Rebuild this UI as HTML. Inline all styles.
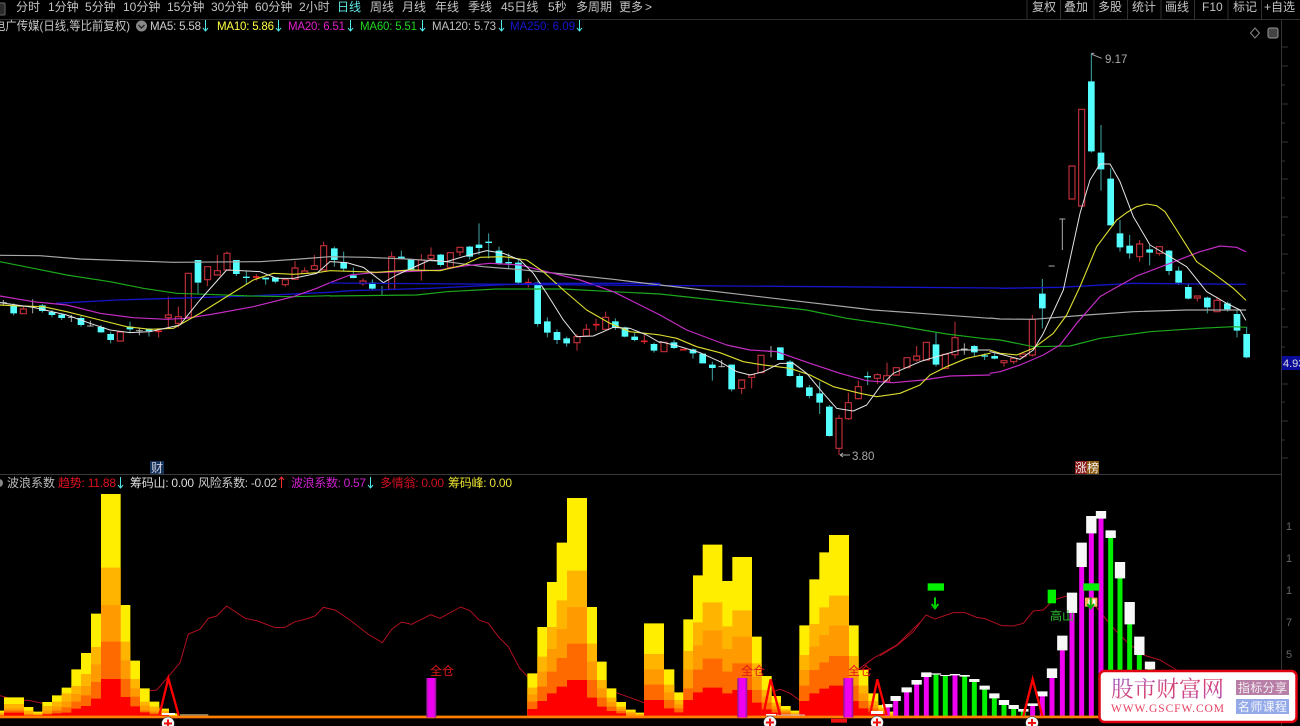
<!DOCTYPE html>
<html><head><meta charset="utf-8"><title>K线</title>
<style>
html,body{margin:0;padding:0;background:#000;width:1300px;height:726px;overflow:hidden}
svg{position:absolute;left:0;top:0;display:block}
text{font-family:"Liberation Sans","Noto Sans CJK SC",sans-serif;font-size:12px}
.tb{fill:#c4c4c4}
.lg{font-size:11.5px}
path{fill:none}
.cw{stroke:#3fa5a5;stroke-width:3}
.cb{stroke:#54ffff;stroke-width:20}
.rw{stroke:#c4303a;stroke-width:3}
.rb{fill:#000;stroke:#c4303a;stroke-width:3.4}
.rd{stroke:#e8202a;stroke-width:5}
.wd{stroke:#aaa;stroke-width:3}
.m5,.m10,.m20,.m60,.m120,.m250{stroke-linejoin:round;stroke-linecap:round}
.m5{stroke:#e4e4e4;stroke-width:3}
.m10{stroke:#dcdc30;stroke-width:3.4}
.m20{stroke:#c42cc4;stroke-width:3.6}
.m60{stroke:#1ca81c;stroke-width:3.6}
.m120{stroke:#a8a8a8;stroke-width:3.6}
.m250{stroke:#1414c8;stroke-width:4}
.wv{stroke:#b01020;stroke-width:3}
.tri{stroke:#f00;stroke-width:7;stroke-linejoin:miter}
.y1{fill:#ffee00}.y2{fill:#ffb400}.y3{fill:#ff9a00}.y4{fill:#ff6a00}.y5{fill:#ff0000}
.mg{stroke:#f000f0;stroke-width:15}
.gr{stroke:#00f000;stroke-width:15}
.wh{stroke:#f8f8f8;stroke-width:31}
</style></head>
<body>
<svg width="1300" height="726" viewBox="0 0 1300 726" xmlns="http://www.w3.org/2000/svg">
<defs>
<linearGradient id="wm" x1="0" y1="0" x2="1" y2="1">
<stop offset="0" stop-color="#9a60d8"/><stop offset=".5" stop-color="#d84070"/><stop offset="1" stop-color="#b050c0"/>
</linearGradient>
<linearGradient id="pb" x1="0" y1="0" x2="1" y2="0">
<stop offset="0" stop-color="#80208a"/><stop offset=".25" stop-color="#f000f0"/><stop offset=".75" stop-color="#f000f0"/><stop offset="1" stop-color="#80208a"/>
</linearGradient>
</defs>
<rect width="1300" height="726" fill="#000"/>

<!-- frame -->
<path d="M0 19.5H1300" stroke="#303030"/>
<path d="M0 474.5H1282" stroke="#3a3a3a"/>
<path d="M1281.5 20V726" stroke="#333"/>
<path d="M1027 0V19M1060.5 0V19M1094 0V19M1127.5 0V19M1161 0V19M1194.5 0V19M1228 0V19M1261.5 0V19" stroke="#303030"/>
<path d="M1282 47H1288M1282 66H1288M1282 85H1285M1282 104H1288M1282 123H1285M1282 142H1288M1282 161H1285M1282 179H1288M1282 198H1285M1282 217H1288M1282 235H1285M1282 254H1288M1282 273H1285M1282 291H1288M1282 309H1285M1282 327H1288M1282 347H1285M1282 384H1288M1282 402H1285M1282 421H1288M1282 440H1285M1282 458H1288" stroke="#333"/>

<!-- toolbar left icon -->
<rect x="-3" y="3" width="8" height="12" rx="1" fill="#2a2a2a" stroke="#666"/>
<g class="tb">
<text x="16" y="11" class="tb">分时</text>
<text x="48" y="11" class="tb">1分钟</text>
<text x="85" y="11" class="tb">5分钟</text>
<text x="123" y="11" class="tb">10分钟</text>
<text x="167" y="11" class="tb">15分钟</text>
<text x="211" y="11" class="tb">30分钟</text>
<text x="255" y="11" class="tb">60分钟</text>
<text x="299" y="11" class="tb">2小时</text>
<text x="337" y="11" style="fill:#5fe8e8">日线</text>
<text x="370" y="11" class="tb">周线</text>
<text x="402" y="11" class="tb">月线</text>
<text x="435" y="11" class="tb">年线</text>
<text x="468" y="11" class="tb">季线</text>
<text x="501" y="11" class="tb">45日线</text>
<text x="548" y="11" class="tb">5秒</text>
<text x="576" y="11" class="tb">多周期</text>
<text x="619" y="11" class="tb">更多</text>
<text x="645" y="11" class="tb">&gt;</text>
<text x="1032" y="11" class="tb">复权</text>
<text x="1064" y="11" class="tb">叠加</text>
<text x="1098" y="11" class="tb">多股</text>
<text x="1132" y="11" class="tb">统计</text>
<text x="1165" y="11" class="tb">画线</text>
<text x="1202" y="11" class="tb">F10</text>
<text x="1233" y="11" class="tb">标记</text>
<text x="1264" y="11" class="tb">+自选</text>
</g>

<!-- MA legend -->
<text x="-6" y="30" fill="#c8c8c8" textLength="136" lengthAdjust="spacingAndGlyphs">电广传媒(日线,等比前复权)</text>
<circle cx="141.5" cy="26" r="5.5" fill="#888"/>
<path d="M138.5 25l3 3 3-3" stroke="#222" stroke-width="1.4"/>
<text x="150" y="30" class="lg" fill="#d0d0d0" textLength="51">MA5: 5.58</text>
<text x="217" y="30" class="lg" fill="#ffff40" textLength="57">MA10: 5.86</text>
<text x="288" y="30" class="lg" fill="#e020c8" textLength="57">MA20: 6.51</text>
<text x="360" y="30" class="lg" fill="#20d820" textLength="57">MA60: 5.51</text>
<text x="432" y="30" class="lg" fill="#c0c0c0" textLength="64">MA120: 5.73</text>
<text x="510" y="30" class="lg" fill="#1616d0" textLength="65">MA250: 6.09</text>
<path d="M205.5 20V31M203 28l2.5 3 2.5-3M278.5 20V31M276 28l2.5 3 2.5-3M350.5 20V31M348 28l2.5 3 2.5-3M422.5 20V31M420 28l2.5 3 2.5-3M501.5 20V31M499 28l2.5 3 2.5-3M579.5 20V31M577 28l2.5 3 2.5-3" stroke="#50e8e8"/>
<path d="M1255 28l4.5 5-4.5 5-4.500-5z" stroke="#888"/>
<rect x="1268" y="28" width="10" height="10" rx="2" stroke="#999" fill="#444"/>

<!-- Candles zone 3 -->
<g transform="translate(0,210) scale(.33333)">
<path class="cw" d="M41 280V316M127 282V308M156 300V322M185 310V330M243 318V350M303 345V368M332 365V400M390 335V368M447 355V380M594 150V250M709 150V198M739 182V222M797 204V224M826 202V220"/>
<path class="cb" d="M41 285V310M127 286V303M156 306V315M185 314V324M243 324V345M303 351V367M332 372V390M390 350V358M447 356V363M594 150V218M709 150V192M739 200V204M797 203V208M826 202V215"/>
<path class="wd" d="M10 270V285M0 278H20M98 268V310M88 290H108M214 315V336M204 322H224M271 332V350M261 348H281M418 352V376M408 362H428"/>
<path class="rw" d="M70 288V297M505 260V352M535 290V352M622 209V228M652 135V182M681 124V130M856 224V230M885 153V174M914 172V183M943 135V167M971 95V107M476 362V382M769 192V212"/>
<path class="rb" d="M61 297h18V311H61zM352 366h18V393h-18zM496 315h18V323h-18zM526 320h18V340h-18zM556 190h18V322h-18zM614 170h18V209h-18zM643 182h18V195h-18zM672 130h18V180h-18zM847 209h18V224h-18zM876 174h18V208h-18zM905 183h18V190h-18zM934 167h18V178h-18zM962 107h18V180h-18z"/>
<path class="rd" d="M759 201H779M466 364H486"/>
</g>
<!-- Candles zone 4 -->
<g transform="translate(330,210) scale(.33333)">
<path class="cw" d="M13 110V170M41 125V185M70 172V205M127 208V242M156 228V254M214 122V148M243 146V180M332 132V170M419 108V148M447 40V134M476 70V145M507 110V165M536 130V175M565 150V222M623 215V350M652 322V382M681 358V402M710 380V410M856 325V360M885 350V382M914 368V394M972 398V428"/>
<path class="cb" d="M13 115V150M41 157V176M70 196V204M127 218V236M214 140V146M243 147V178M332 134V165M419 110V140M447 104V114M476 95V99M507 122V160M536 156V160M565 158V218M623 218V342M652 334V368M681 366V390M710 385V400M856 334V354M885 352V380M914 380V390M972 402V422"/>
<path class="rw" d="M99 205V227M185 125V240M274 132V212M303 112V152M361 126V175M390 112V138M595 205V232M741 372V422M769 342V380M798 326V362M827 305V360M943 375V402"/>
<path class="rb" d="M90 213h18V221H90zM176 140h18V238h-18zM265 150h18V182h-18zM294 136h18V146h-18zM352 128h18V172h-18zM381 112h18V126h-18zM732 380h18V398h-18zM760 358h18V378h-18zM818 322h18V358h-18z"/>
<path class="rd" d="M585 218h20M789 344h20M933 394h20"/>
</g>
<!-- Candles zone 5 -->
<g transform="translate(660,310) scale(.33333)">
<path class="cw" d="M42 90V117M99 115V146M157 155V212M215 164V244M361 112V150M390 150V200M419 190V234M448 225V265M479 215V312M508 285V380M623 185V225M828 68V170M943 105V138M974 130V150"/>
<path class="cb" d="M42 97V114M99 118V130M128 131V160M157 164V174M215 164V238M361 112V150M390 155V198M419 198V232M448 232V258M479 250V278M508 290V378M623 198V202M828 103V164M943 108V127M974 136V140"/>
<path class="wd" d="M333 108V142M323 124H343M185 150V172M175 170H195M913 100V134M903 117H923"/>
<path class="rw" d="M245 208V252M275 194V235M537 315V435M565 248V330M595 212V268M652 190V222M681 158V215M770 108V155M855 132V178M885 35V145"/>
<path class="rb" d="M3 97h18V125H3zM236 210h18V235h-18zM266 194h18V202h-18zM294 136h18V188h-18zM528 325h18V415h-18zM556 278h18V326h-18zM586 230h18V266h-18zM643 194h18V205h-18zM671 197h18V213h-18zM700 173h18V195h-18zM732 143h18V173h-18zM761 138h18V150h-18zM790 97h18V150h-18zM847 133h18V175h-18zM876 83h18V134h-18z"/>
<path class="rd" d="M60 119H80"/>
</g>
<!-- Candles zone 6 -->
<g transform="translate(1000,40) scale(.33333)">
<path class="cw" d="M-16 940V958M127 717V865M274 40V338M303 255V452M332 385V556M360 540V635M389 585V656M449 615V676M507 630V705M536 680V735M565 733V778M622 770V820M683 785V815M711 812V892M740 860V955"/>
<path class="cb" d="M-16 948V956M127 761V805M274 124V334M303 338V388M332 416V556M360 580V622M389 617V640M449 628V638M507 632V693M536 692V728M565 741V776M622 773V802M682 790V808M711 822V872M740 882V952"/>
<path class="wd" d="M146 678H164M187 537V630M178 537H196"/>
<path class="rw" d="M12 962V980M41 955V972M69 940V955M97 825V950M419 600V665M478 618V647M592 768V785M651 770V815"/>
<path class="rb" d="M3 962h18V968H3zM32 955h18V965H32zM60 942h18V950H60zM88 838h18V945H88zM207 378h18V477h-18zM236 208h18V498h-18zM410 612h18V650h-18zM469 620h18V640h-18zM583 768h18V774h-18zM642 781h18V815h-18z"/>
</g>

<!-- MA lines -->
<g transform="translate(0,210) scale(.33333)">
<path class="m250" d="M170 280L350 270 520 265 750 258 990 247"/>
<path class="m120" d="M0 136L120 137 240 147 380 152 520 157 780 155 900 147 990 140"/>
<path class="m60" d="M0 155L100 175 200 195 330 215 430 235 530 250 620 253 750 258 880 260 990 257"/>
<path class="m20" d="M0 258L100 275 200 285 300 310 400 323 500 328 560 325 640 312 760 290 880 260 950 235 990 218"/>
<path class="m10" d="M0 285L60 288 130 290 200 305 300 330 380 350 450 358 520 355 600 310 680 260 760 210 820 190 880 193 950 188 990 182"/>
<path class="m5" d="M0 278L100 292 200 315 270 340 330 360 390 368 450 365 540 345 600 270 680 180 720 182 780 185 830 205 880 205 950 190 990 155"/>
</g>
<g transform="translate(330,210) scale(.33333)">
<path class="m250" d="M0 247L60 242 300 235 500 225 620 220 990 220"/>
<path class="m120" d="M0 140L110 142 230 147 350 155 460 170 560 178 700 192 850 208 990 225"/>
<path class="m60" d="M0 258L260 255 350 245 500 237 700 237 850 245 990 252"/>
<path class="m20" d="M0 218L60 195 130 188 230 185 330 180 400 168 480 160 570 165 650 185 750 210 850 245 990 315"/>
<path class="m10" d="M0 182L60 184 140 187 240 180 330 182 400 165 450 142 520 140 590 150 640 185 700 240 770 300 840 340 900 365 990 375"/>
<path class="m5" d="M0 155L50 158 100 172 160 218 200 195 300 150 350 155 400 140 470 122 520 130 570 150 610 190 650 250 700 330 740 380 790 378 850 352 900 355 950 375 990 398"/>
</g>
<g transform="translate(660,310) scale(.33333)">
<path class="m250" d="M-990 -81L1020 -66"/>
<path class="m120" d="M0 -75L640 0 780 10 990 25"/>
<path class="m60" d="M0 -48L440 0 560 25 700 45 860 72 990 88"/>
<path class="m20" d="M0 15L80 60 200 105 270 120 350 125 450 160 540 190 620 212 700 218 790 210 870 198 990 195"/>
<path class="m10" d="M0 75L50 85 110 110 180 128 250 155 310 165 390 175 450 195 520 230 600 250 650 260 720 250 780 225 810 195 860 170 920 145 990 130"/>
<path class="m5" d="M0 95L50 107 120 128 180 155 230 185 270 195 310 185 360 160 400 160 440 190 490 250 530 295 580 303 620 285 660 230 700 190 780 155 830 140 900 120 990 120"/>
</g>
<g transform="translate(1000,40) scale(.33333)">
<path class="m250" d="M0 745L180 742 400 730 737 733"/>
<path class="m120" d="M-30 834L0 837 100 838 260 825 400 815 560 810 737 810"/>
<path class="m60" d="M-30 897L0 900 100 920 210 918 300 895 450 875 600 865 700 860 737 862"/>
<path class="m20" d="M-30 1000L0 995 60 975 130 945 180 915 230 850 300 770 410 708 510 670 600 635 660 618 710 622 737 635"/>
<path class="m10" d="M-30 930L0 940 50 945 100 925 160 880 200 825 240 740 290 620 350 540 380 518 410 500 440 492 470 497 495 515 530 570 590 665 640 700 700 745 737 780"/>
<path class="m5" d="M-30 935L0 942 60 958 100 930 130 880 190 750 240 520 270 420 300 372 330 372 360 425 400 530 450 615 510 650 560 680 620 755 680 790 720 810 737 840"/>
<path class="wd" d="M274 40h9M275 43L305 55"/>
</g>
<text x="1105" y="63" fill="#aaa" style="font-size:11.5px">9.17</text>
<path d="M840 455H850M840 455l3-2M840 455l3 2" stroke="#aaa"/>
<text x="852" y="460" fill="#aaa" style="font-size:11.5px">3.80</text>
<rect x="1282" y="356" width="18" height="14" fill="#0c0c9c"/>
<text x="1283" y="367" fill="#ddd" style="font-size:11px">4.93</text>
<rect x="150" y="461" width="14" height="13" fill="#14325a"/>
<text x="151" y="472" fill="#ccd">财</text>
<rect x="1075" y="461" width="12" height="13" fill="#8a1818"/><rect x="1087" y="461" width="12" height="13" fill="#8a5a10"/>
<text x="1075" y="472" fill="#eee">涨榜</text>

<!-- lower legend -->
<circle cx="-1" cy="483" r="4" fill="#888"/>
<text x="7" y="487" fill="#bbb">波浪系数</text>
<text x="58" y="487" fill="#e01020" textLength="58">趋势: 11.88</text>
<path d="M120.5 477V488M118 485l2.5 3 2.5-3" stroke="#50e8e8"/>
<text x="130" y="487" fill="#ddd" textLength="64">筹码山: 0.00</text>
<text x="198" y="487" fill="#ccc" textLength="79">风险系数: -0.02</text>
<path d="M281.5 477V488M279 480l2.5-3 2.5 3" stroke="#f03030"/>
<text x="291" y="487" fill="#d020d0" textLength="75">波浪系数: 0.57</text>
<path d="M370.5 477V488M368 485l2.5 3 2.5-3" stroke="#50e8e8"/>
<text x="380" y="487" fill="#d01020" textLength="64">多情翁: 0.00</text>
<text x="448" y="487" fill="#e8e030" textLength="64">筹码峰: 0.00</text>
<text x="1286" y="530" fill="#666" style="font-size:11px">1</text><text x="1286" y="562" fill="#666" style="font-size:11px">1</text><text x="1286" y="594" fill="#666" style="font-size:11px">1</text><text x="1286" y="626" fill="#666" style="font-size:11px">7</text><text x="1286" y="658" fill="#666" style="font-size:11px">5</text>

<!-- lower panel -->
<g>
<g transform="translate(0,470) scale(.33333)">
<path class="wv" d="M0 677L40 688 90 692 130 700M420 665L470 660 505 620 540 578 565 492 600 478 625 445 650 438 680 408 735 445 770 452 825 473 855 472 885 455 915 448 945 438 970 412 1005 420 1050 450 1105 493 1147 518 1175 478 1205 456 1235 463 1292 434 1320 445 1382 411 1410 422 1437 450 1465 460 1495 500 1525 530 1560 597"/>
<path class="y1" d="M0 738V722H12V682H72V711H100V725H127V696H156V676H185V653H214V598H243V549H273V431H303V72H362V405H391V572H420V655H449V695H478V716H507V730H536V738z"/>
<path class="y2" d="M0 738V728H12V702H72V722H100V730H127V708H156V695H185V670H214V648H243V612H273V531H303V293H362V515H391V627H420V695H449V710H478V722H507V738z"/>
<path class="y3" d="M0 738V733H12V715H72V730H100V733H127V722H156V710H185V695H214V672H243V648H273V583H303V405H362V571H391V655H420V707H449V722H478V728H507V738z"/>
<path class="y4" d="M0 738V735H12V722H72V733H100V735H127V730H156V722H185V712H214V695H243V676H273V636H303V515H362V627H391V680H420V722H449V728H478V733H507V738z"/>
<path class="y5" d="M0 738V737H12V728H72V736H127V733H156V730H185V728H214V716H243V708H273V686H303V627H362V681H391V709H420V727H449V733H478V735H507V738z"/>
<path d="M540 735H625" stroke="#998866" stroke-width="5"/>
</g>
<g transform="translate(520,520) scale(.33333)">
<path class="wv" d="M0 445L22 470M289 518L372 548M760 515L780 508 810 520 838 540M1016 448L1060 415 1130 375 1200 307"/>
<path class="y1" d="M22 588V460H52V321H81V186H110V68H141V-66H201V261H231V425H260V505H289V546H318V569H347V578H372V310H432V448H463V517H490V298H519V166H548V74H607V183H637V111H696V350H725V468H755V528H783V558H812V572H838V316H868V178H898V97H927V45H987V316H1016V450H1045V520H1075V555H1104V575H1133V588z"/>
<path class="y2" d="M22 588V503H52V410H81V321H110V241H141V152H201V371H231V480H260V533H289V560H318V575H347V582H372V402H432V494H463V540H490V393H519V307H548V247H607V319H637V271H696V430H725V510H755V548H783V568H812V578H838V405H868V312H898V262H927V227H987V408H1016V497H1045V543H1075V565H1104V580H1133V588z"/>
<path class="y3" d="M22 588V523H52V455H81V387H110V327H141V261H201V425H231V505H260V546H289V567H318V580H347V588H372V448H432V517H463V553H490V449H519V376H548V332H607V387H637V350H696V470H725V530H755V558H783V573H812V582H838V450H868V380H898V345H927V317H987V450H1016V520H1045V555H1075V572H1104V588z"/>
<path class="y4" d="M22 588V545H52V500H81V455H110V414H141V371H201V480H231V533H260V560H289V573H318V588H372V494H432V540H463V565H490V505H519V449H548V416H607V455H637V430H696V510H725V548H755V568H783V578H812V588H838V497H868V450H898V427H927V408H987V497H1016V543H1045V565H1075V577H1104V588z"/>
<path class="y5" d="M22 588V567H52V543H81V520H110V500H141V480H201V533H231V560H260V573H289V580H318V588H372V540H432V565H463V577H490V540H519V517H548V503H607V520H637V510H696V548H725V568H755V578H783V583H812V588H838V543H868V520H898V506H927V497H987V543H1016V565H1045V577H1075V582H1104V588z"/>
<path d="M770 585h85" stroke="#ccc" stroke-width="3"/>
<rect x="933" y="590" width="48" height="18" fill="#f01010"/>
</g>
<g transform="translate(880,500) scale(.33333)">
<path class="wv" d="M0 467L50 437 100 395 138 345 165 357 220 338 255 338 290 352 315 356 365 377 400 378 430 370 460 333 490 330 520 300 560 288M640 310L680 360 710 395 740 425 790 465 840 480 890 510"/>
<path class="mg" d="M47 648V595M80 648V570M110 648V547M139 648V524M225 648V525M458 648V615M487 648V580M516 648V520M547 648V430M576 648V310M605 648V165M634 648V75M663 648V45M22 648V622"/>
<path class="gr" d="M168 648V523M196 648V527M254 648V528M283 648V540M314 648V563M343 648V588M372 648V608M401 648V622M430 648V632M692 648V103M720 648V210M749 648V340M778 648V440M810 648V497"/>
<path class="wh" d="M47 588V603M80 562V577M110 540V554M139 517V531M168 520V524M196 525V528M225 522V526M254 525V530M283 537V546M314 557V569M343 580V595M372 600V615M401 615V627M430 627V635M458 610V618M487 574V589M516 505V534M547 407V451M576 278V339M605 128V201M634 48V100M663 33V56M692 91V114M720 186V235M749 306V373M778 410V465M810 485V508M22 612V622"/>
<rect x="143" y="250" width="49" height="22" fill="#00f000"/>
<rect x="503" y="269" width="25" height="41" fill="#00f000"/>
<rect x="615" y="293" width="37" height="27" fill="#f8b050"/>
<rect x="625" y="298" width="8" height="18" fill="#fff"/><rect x="638" y="298" width="8" height="18" fill="#fff"/>
<rect x="610" y="250" width="48" height="22" fill="#00f000"/>
<path d="M165 292V325M155 312L165 325 175 312" stroke="#00d000" stroke-width="6"/>
<path d="M632 292V325M622 312L632 325 642 312" stroke="#00b000" stroke-width="6"/>
</g>
</g>
<path d="M0 716.8H1099" stroke="#ff8000" stroke-width="2.4"/>
<path d="M0 718.5H1099" stroke="#7a2a00" stroke-width=".8"/>

<!-- purple bars -->
<rect x="426.3" y="678" width="10" height="39.5" fill="url(#pb)"/>
<rect x="737.3" y="678" width="10" height="39.5" fill="url(#pb)"/>
<rect x="843.3" y="678" width="10" height="39.5" fill="url(#pb)"/>
<text x="430" y="675" fill="#e01818">全仓</text>
<text x="741" y="675" fill="#e01818">全仓</text>
<text x="848" y="675" fill="#e01818">全仓</text>

<!-- triangles -->
<path class="tri" transform="translate(0,470) scale(.33333)" d="M478 736L505 625 536 736"/>
<path class="tri" transform="translate(520,520) scale(.33333)" d="M730 585L752 478 780 585M1050 585L1072 478 1100 585"/>
<path class="tri" transform="translate(880,500) scale(.33333)" d="M430 648L458 538 487 648"/>
<!-- white marks + circles -->
<rect x="162" y="713" width="13" height="2" fill="#fff"/>
<rect x="766" y="714" width="10" height="1.5" fill="#fff"/>
<rect x="871" y="711" width="12" height="3" fill="#fff"/>
<g stroke="#222" stroke-width=".6" fill="#f4f4f4">
<circle cx="168" cy="723.5" r="6.5"/><circle cx="770" cy="722.5" r="6.5"/><circle cx="877" cy="722.5" r="6.5"/><circle cx="1032" cy="723" r="6.5"/>
</g>
<path d="M164 723.5h8M168 719.5v8M766 722.5h8M770 718.5v8M873 722.5h8M877 718.5v8M1028 723h8M1032 719v8" stroke="#f01010" stroke-width="2"/>
<text x="1050" y="620" fill="#30c030">高山</text>

<!-- watermark -->
<rect x="1099.5" y="671" width="197" height="51" rx="5" fill="#fff" stroke="#e00010" stroke-width="2.5"/>
<text x="1111" y="697" fill="url(#wm)" style="font-family:'Liberation Serif','Noto Serif CJK SC',serif;font-size:22.5px" textLength="113">股市财富网</text>
<text x="1111" y="712" fill="#e84060" style="font-family:'Liberation Serif',serif;font-size:11.5px" textLength="113">WWW.GSCFW.COM</text>
<rect x="1236" y="680" width="53" height="15" fill="#b87fa6"/>
<rect x="1236" y="699" width="53" height="15" fill="#94aae8"/>
<text x="1238" y="692" fill="#f4eef4" textLength="49">指标分享</text>
<text x="1238" y="711" fill="#f4f4fc" textLength="49">名师课程</text>
</svg>
</body></html>
